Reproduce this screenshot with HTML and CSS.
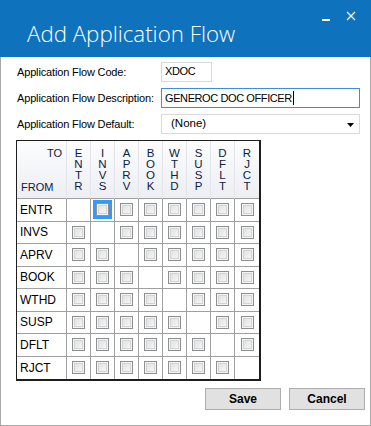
FILE: index.html
```html
<!DOCTYPE html>
<html>
<head>
<meta charset="utf-8">
<link rel="stylesheet" href="styles.css">
</head>
<body>
<div class="window">
  <div class="titlebar">
    <div class="title">Add Application Flow</div>
    <div class="controls">
      <span class="minimize"></span>
      <svg class="close" width="10" height="10" viewBox="0 0 10 10"><path d="M1 1 L9 9 M9 1 L1 9" stroke="#fff" stroke-width="1.3"/></svg>
    </div>
  </div>
  <div class="content">
    <div class="form">
      <label class="lbl">Application Flow Code:</label>
      <div class="input short">XDOC</div>
      <label class="lbl">Application Flow Description:</label>
      <div class="input wide focused">GENEROC DOC OFFICER<span class="caret"></span></div>
      <label class="lbl">Application Flow Default:</label>
      <div class="input wide select">(None)<svg class="arrow" width="7" height="4" viewBox="0 0 7 4"><path d="M0 0 H7 L3.5 4 Z" fill="#000"/></svg></div>
    </div>

    <div class="grid">
      <div class="hcell corner"><span class="to">TO</span><span class="from">FROM</span></div>
      <div class="hcell col">E<br>N<br>T<br>R</div>
      <div class="hcell col">I<br>N<br>V<br>S</div>
      <div class="hcell col">A<br>P<br>R<br>V</div>
      <div class="hcell col">B<br>O<br>O<br>K</div>
      <div class="hcell col">W<br>T<br>H<br>D</div>
      <div class="hcell col">S<br>U<br>S<br>P</div>
      <div class="hcell col">D<br>F<br>L<br>T</div>
      <div class="hcell col last">R<br>J<br>C<br>T</div>

      <div class="rcell">ENTR</div>
      <div class="cell"></div>
      <div class="cell"><span class="sel"><span class="cb"></span></span></div>
      <div class="cell"><span class="cb"></span></div>
      <div class="cell"><span class="cb"></span></div>
      <div class="cell"><span class="cb"></span></div>
      <div class="cell"><span class="cb"></span></div>
      <div class="cell"><span class="cb"></span></div>
      <div class="cell last"><span class="cb"></span></div>

      <div class="rcell">INVS</div>
      <div class="cell"><span class="cb"></span></div>
      <div class="cell"></div>
      <div class="cell"><span class="cb"></span></div>
      <div class="cell"><span class="cb"></span></div>
      <div class="cell"><span class="cb"></span></div>
      <div class="cell"><span class="cb"></span></div>
      <div class="cell"><span class="cb"></span></div>
      <div class="cell last"><span class="cb"></span></div>

      <div class="rcell">APRV</div>
      <div class="cell"><span class="cb"></span></div>
      <div class="cell"><span class="cb"></span></div>
      <div class="cell"></div>
      <div class="cell"><span class="cb"></span></div>
      <div class="cell"><span class="cb"></span></div>
      <div class="cell"><span class="cb"></span></div>
      <div class="cell"><span class="cb"></span></div>
      <div class="cell last"><span class="cb"></span></div>

      <div class="rcell">BOOK</div>
      <div class="cell"><span class="cb"></span></div>
      <div class="cell"><span class="cb"></span></div>
      <div class="cell"><span class="cb"></span></div>
      <div class="cell"></div>
      <div class="cell"><span class="cb"></span></div>
      <div class="cell"><span class="cb"></span></div>
      <div class="cell"><span class="cb"></span></div>
      <div class="cell last"><span class="cb"></span></div>

      <div class="rcell">WTHD</div>
      <div class="cell"><span class="cb"></span></div>
      <div class="cell"><span class="cb"></span></div>
      <div class="cell"><span class="cb"></span></div>
      <div class="cell"><span class="cb"></span></div>
      <div class="cell"></div>
      <div class="cell"><span class="cb"></span></div>
      <div class="cell"><span class="cb"></span></div>
      <div class="cell last"><span class="cb"></span></div>

      <div class="rcell">SUSP</div>
      <div class="cell"><span class="cb"></span></div>
      <div class="cell"><span class="cb"></span></div>
      <div class="cell"><span class="cb"></span></div>
      <div class="cell"><span class="cb"></span></div>
      <div class="cell"><span class="cb"></span></div>
      <div class="cell"></div>
      <div class="cell"><span class="cb"></span></div>
      <div class="cell last"><span class="cb"></span></div>

      <div class="rcell">DFLT</div>
      <div class="cell"><span class="cb"></span></div>
      <div class="cell"><span class="cb"></span></div>
      <div class="cell"><span class="cb"></span></div>
      <div class="cell"><span class="cb"></span></div>
      <div class="cell"><span class="cb"></span></div>
      <div class="cell"><span class="cb"></span></div>
      <div class="cell"></div>
      <div class="cell last"><span class="cb"></span></div>

      <div class="rcell">RJCT</div>
      <div class="cell"><span class="cb"></span></div>
      <div class="cell"><span class="cb"></span></div>
      <div class="cell"><span class="cb"></span></div>
      <div class="cell"><span class="cb"></span></div>
      <div class="cell"><span class="cb"></span></div>
      <div class="cell"><span class="cb"></span></div>
      <div class="cell"><span class="cb"></span></div>
      <div class="cell last"></div>
    </div>

    <div class="buttons">
      <button class="btn">Save</button>
      <button class="btn">Cancel</button>
    </div>
  </div>
</div>
</body>
</html>
```

FILE: styles.css
```css
html, body {
  margin: 0;
  padding: 0;
  background: #fff;
}
.window {
  width: 371px;
  height: 426px;
  box-sizing: border-box;
  border: 1px solid #a9a9a9;
  border-top: none;
  display: flex;
  flex-direction: column;
  font-family: "Liberation Sans", Arial, sans-serif;
}
.titlebar {
  height: 57px;
  background: #0f72bc;
  display: flex;
  justify-content: space-between;
  margin: 0 -1px;
}
.title {
  color: #fff;
  font-family: "Open Sans", sans-serif;
  font-weight: 300;
  font-size: 22.3px;
  padding: 18px 0 0 27px;
}
.controls {
  display: flex;
  align-items: flex-start;
  gap: 16px;
  padding: 11px 15px 0 0;
}
.minimize {
  width: 8px;
  height: 2px;
  background: #fff;
  margin-top: 8px;
}
.close {
  margin-top: 0;
}
.content {
  flex: 1;
  padding: 5px 0 0 15px;
  display: flex;
  flex-direction: column;
}
.form {
  display: grid;
  grid-template-columns: 145px auto;
  row-gap: 6px;
  align-items: center;
}
.lbl {
  font-size: 11px;
  color: #000;
  padding-left: 1px;
  white-space: nowrap;
  letter-spacing: -0.15px;
}
.input {
  height: 20px;
  box-sizing: border-box;
  border: 1px solid #d9d9d9;
  font-size: 11px;
  letter-spacing: -0.4px;
  padding: 2px 0 0 3px;
  color: #000;
  position: relative;
  white-space: nowrap;
}
.short { width: 51px; }
.wide { width: 199px; }
.focused {
  border-color: #3c8ce0;
}
.caret {
  display: inline-block;
  width: 1px;
  height: 14px;
  background: #000;
  vertical-align: -3px;
  margin-left: 1px;
}
.select {
  border-color: #dadada;
  padding-left: 9px;
  letter-spacing: 0;
  font-size: 11.5px;
}
.arrow {
  position: absolute;
  right: 5px;
  top: 8px;
}
.grid {
  margin-top: 6px;
  width: 242px;
  display: grid;
  grid-template-columns: 50px repeat(8, 24px);
  grid-template-rows: 58px repeat(8, 22.5px);
  border: 1px solid #1e1e1e;
  border-right-width: 2px;
  border-bottom-width: 2px;
  box-sizing: content-box;
}
.hcell {
  background: linear-gradient(#fdfdfe, #eceef3);
  border-right: 1px solid #e2e4e9;
  border-bottom: 1px solid #a0a0a0;
  box-sizing: border-box;
  font-size: 11px;
  color: #0c2045;
}
.corner {
  position: relative;
}
.to {
  position: absolute;
  right: 4px;
  top: 6px;
}
.from {
  position: absolute;
  left: 4px;
  bottom: 5px;
}
.col {
  text-align: center;
  line-height: 11px;
  padding-top: 7px;
  font-size: 11.5px;
}
.hcell.last, .cell.last { border-right: none; }
.rcell {
  border-right: 1px solid #a0a0a0;
  border-bottom: 1px solid #a0a0a0;
  box-sizing: border-box;
  font-size: 12px;
  color: #000;
  padding-left: 3px;
  display: flex;
  align-items: center;
}
.rcell:nth-last-child(9) { border-bottom: none; }
.cell {
  border-right: 1px solid #a0a0a0;
  border-bottom: 1px solid #a0a0a0;
  box-sizing: border-box;
  display: flex;
  align-items: center;
  justify-content: center;
}
.cell:nth-last-child(-n+8) { border-bottom: none; }
.cb {
  display: block;
  width: 13px;
  height: 13px;
  box-sizing: border-box;
  border: 1px solid #8e8f8f;
  background: linear-gradient(135deg, #dcdcdc, #fbfbfb);
  box-shadow: inset 0 0 0 1px #f4f4f4, inset 0 0 0 2px #d2d4d8;
}
.sel {
  display: flex;
  align-items: center;
  justify-content: center;
  width: 19px;
  height: 19px;
  background: #3399ff;
}
.buttons {
  display: flex;
  justify-content: flex-end;
  gap: 8px;
  padding: 7px 5px 0 0;
}
.btn {
  width: 76px;
  height: 22px;
  background: #e1e1e1;
  border: 1px solid #adadad;
  font-family: "Liberation Sans", Arial, sans-serif;
  font-weight: bold;
  font-size: 12px;
  color: #000;
  padding: 0;
}
```
